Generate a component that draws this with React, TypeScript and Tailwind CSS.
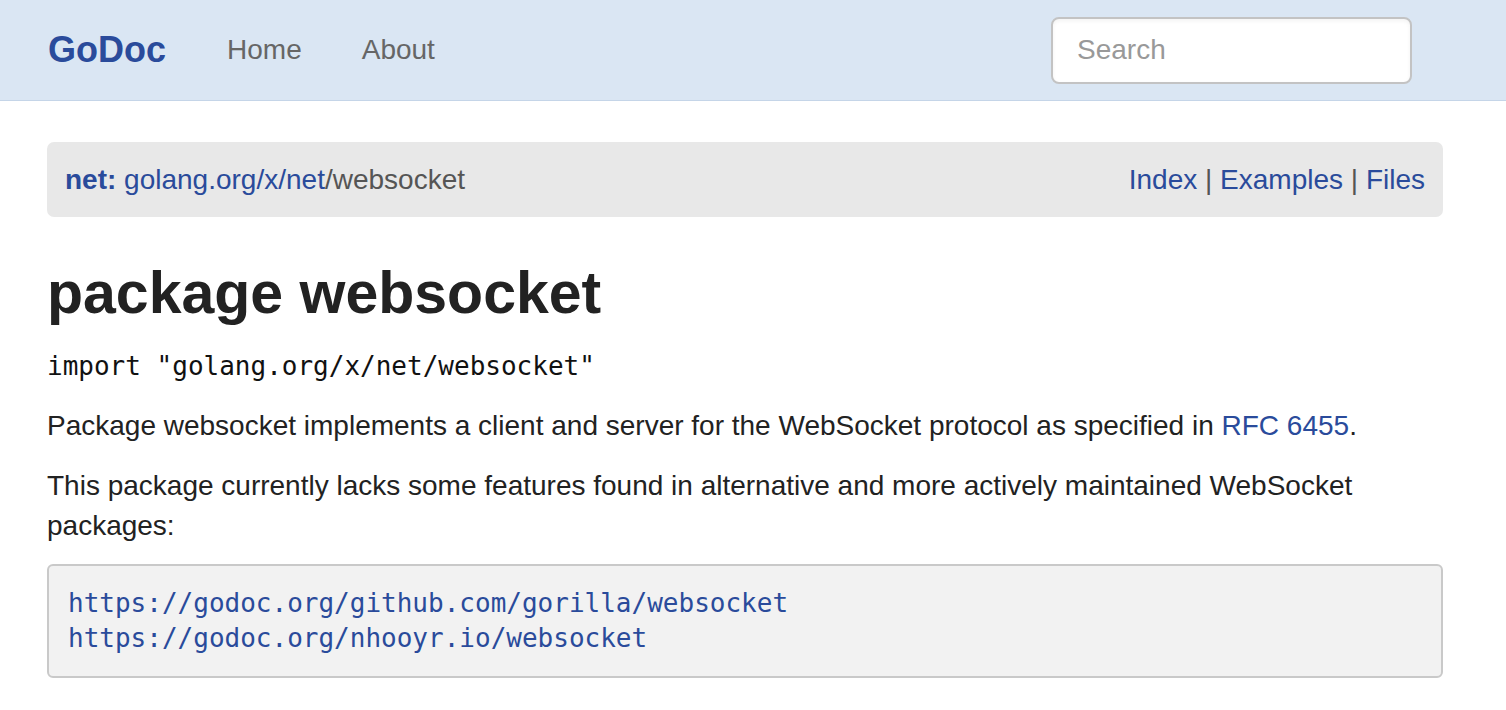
export default function App() {
  const sans = { fontFamily: '"Liberation Sans", Arial, sans-serif' };
  const mono = { fontFamily: '"DejaVu Sans Mono", Menlo, monospace' };
  return (
    <div className="min-h-[710px] bg-white text-[28px] leading-[40px] text-[#222]" style={sans}>
      <nav className="flex h-[101px] items-center border-b border-[#c5d5e8] bg-[#dae6f3] pl-[48px]">
        <a className="text-[36px] font-bold text-[#2a4b9b]">GoDoc</a>
        <a className="ml-[61px] text-[#666]">Home</a>
        <a className="ml-[60px] text-[#666]">About</a>
        <div className="ml-auto mr-[94px] flex h-[67px] w-[361px] items-center rounded-[8px] border-2 border-[#c3c3c3] bg-white px-[24px] shadow-inner">
          <span className="text-[#999]">Search</span>
        </div>
      </nav>

      <main className="w-[1443px] pl-[47px]">
        <div className="mt-[41px] flex h-[75px] items-center justify-between rounded-[7px] bg-[#e8e8e8] px-[18px]">
          <div>
            <span className="font-bold text-[#2a4b9b]">net:</span>{" "}
            <a className="text-[#2a4b9b]">golang.org/x/net</a>
            <span className="text-[#555]">/websocket</span>
          </div>
          <div className="text-[#555]">
            <a className="text-[#2a4b9b]">Index</a> | <a className="text-[#2a4b9b]">Examples</a> |{" "}
            <a className="text-[#2a4b9b]">Files</a>
          </div>
        </div>

        <h1 className="mt-[42px] text-[59px] font-bold leading-[68px] text-[#222]">package websocket</h1>

        <p className="mt-[19px] text-[26px] text-[#111]" style={mono}>
          import "golang.org/x/net/websocket"
        </p>

        <p className="mt-[20px]">
          Package websocket implements a client and server for the WebSocket protocol as specified in{" "}
          <a className="text-[#2a4b9b]">RFC 6455</a>.
        </p>

        <p className="mt-[20px] pr-[30px]">
          This package currently lacks some features found in alternative and more actively maintained WebSocket
          packages:
        </p>

        <pre
          className="mt-[18px] rounded-[6px] border-2 border-[#c9c9c9] bg-[#f2f2f2] px-[19px] pb-[20px] pt-[20px] text-[26px] leading-[35px] text-[#2a4b9b]"
          style={mono}
        >
          <a>https://godoc.org/github.com/gorilla/websocket</a>
          {"\n"}
          <a>https://godoc.org/nhooyr.io/websocket</a>
        </pre>
      </main>
    </div>
  );
}
